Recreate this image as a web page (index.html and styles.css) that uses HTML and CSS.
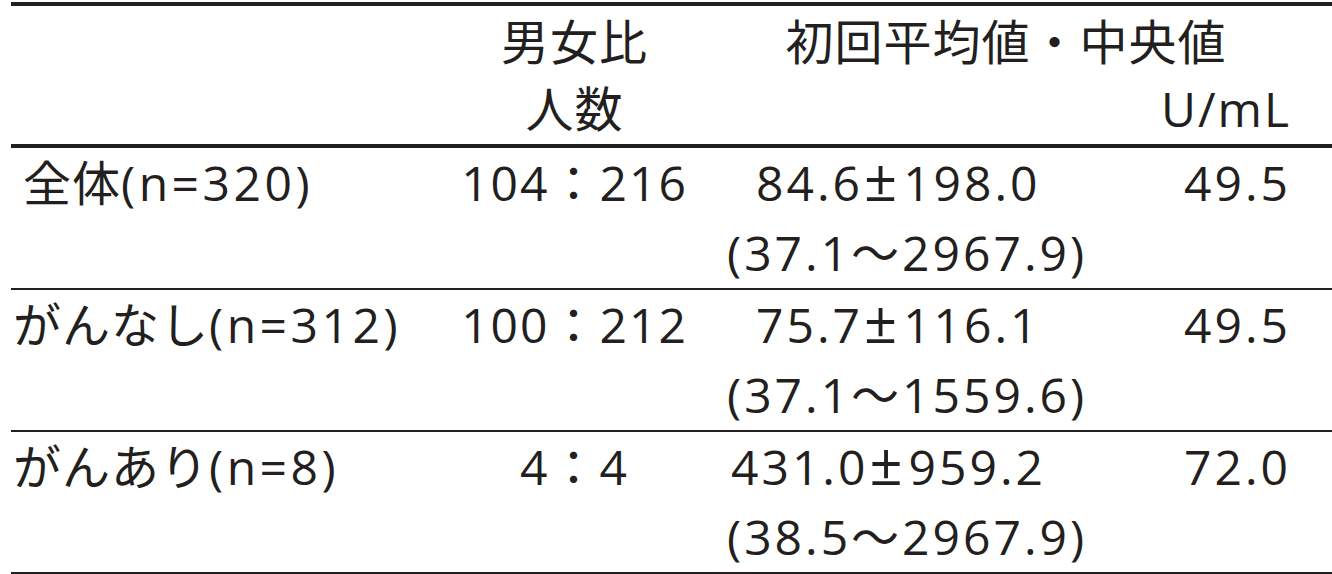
FILE: index.html
```html
<!DOCTYPE html>
<html lang="ja">
<head>
<meta charset="utf-8">
<title>表</title>
<link rel="stylesheet" href="styles.css">
</head>
<body>
<table class="tbl">
  <thead>
    <tr class="h1">
      <th class="c1"></th>
      <th class="c2">男女比</th>
      <th class="c34" colspan="2">初回平均値・中央値</th>
    </tr>
    <tr class="h2">
      <th class="c1"></th>
      <th class="c2">人数</th>
      <th class="c3"></th>
      <th class="c4 unit">U/mL</th>
    </tr>
  </thead>
  <tbody>
    <tr>
      <td class="c1 indent">全体<span class="n">(n=320)</span></td>
      <td class="c2">104：216</td>
      <td class="c3"><div class="lead">84.6<span class="pm">±</span>198.0</div><div>(37.1～2967.9)</div></td>
      <td class="c4">49.5</td>
    </tr>
    <tr>
      <td class="c1">がんなし<span class="n">(n=312)</span></td>
      <td class="c2">100：212</td>
      <td class="c3"><div class="lead">75.7<span class="pm">±</span>116.1</div><div>(37.1～1559.6)</div></td>
      <td class="c4">49.5</td>
    </tr>
    <tr class="last">
      <td class="c1">がんあり<span class="n">(n=8)</span></td>
      <td class="c2">4：4</td>
      <td class="c3"><div class="wide">431.0<span class="pm">±</span>959.2</div><div>(38.5～2967.9)</div></td>
      <td class="c4">72.0</td>
    </tr>
  </tbody>
</table>
</body>
</html>
```

FILE: styles.css
```css
html, body {
  margin: 0;
  padding: 0;
  background: #ffffff;
}

body {
  overflow: hidden;
  font-family: "Open Sans", "Noto Sans CJK JP", sans-serif;
  font-size: 48px;
  letter-spacing: 1px;
  color: #231f20;
}

.tbl {
  margin: 2px 0 0 11px;
  width: 1321px;
  table-layout: fixed;
  border-collapse: separate;
  border-spacing: 0;
  border-top: 4px solid #231f20;
}

.tbl th,
.tbl td {
  padding: 0;
  font-weight: normal;
  vertical-align: top;
  white-space: nowrap;
}

.c1 { width: 439px; text-align: left; padding-left: 2px !important; }
.c2 { width: 245px; text-align: center; }
.c3 { width: 420px; text-align: left; padding-left: 30px !important; box-sizing: border-box; }
.c4 { text-align: right; padding-right: 41px !important; }
.c34 { text-align: center; padding-right: 17px !important; }

tbody .c2 { letter-spacing: 2px; }
tbody .c3,
tbody .c4 { letter-spacing: 3px; }
.unit { letter-spacing: 2px; }

.indent { padding-left: 12px !important; }

.n { letter-spacing: 3.5px; }

.pm {
  font-size: 58px;
  line-height: 0;
  margin: 0 3px 0 1px;
}

thead th {
  line-height: 67px;
}

.h1 th { padding-top: 2px; }
.h2 th {
  padding-bottom: 2px;
  border-bottom: 4px solid #231f20;
}

tbody td {
  line-height: 70px;
  height: 140px;
  border-bottom: 2px solid #231f20;
}

tbody .last td {
  border-bottom: 4px solid #231f20;
}

.lead { padding-left: 29px; }
.wide { padding-left: 4px; }
```
